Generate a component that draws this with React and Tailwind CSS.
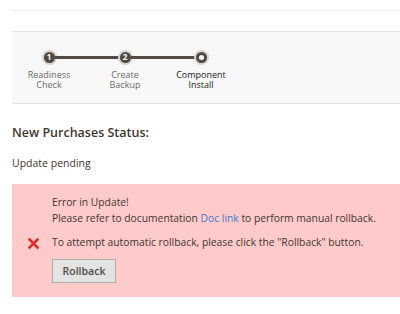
import React from "react";

const steps = [
  { n: "1", top: "Readiness", bottom: "Check", done: true },
  { n: "2", top: "Create", bottom: "Backup", done: true },
  { n: "", top: "Component", bottom: "Install", done: false },
];

const Step = ({ step, index }) => {
  const first = index === 0;
  const last = index === steps.length - 1;
  return (
    <div className="w-[76px] flex flex-col items-center">
      <div className="w-full h-[14px] flex items-center">
        <div className={`flex-1 h-[3px] ${first ? "" : "bg-[#514943]"}`}></div>
        {step.done ? (
          <div className="w-[11px] h-[11px] rounded-full bg-[#514943] shadow-[0_0_0_2px_#d6d3d0] flex items-center justify-center">
            <span className="text-[8px] leading-none font-bold text-white">{step.n}</span>
          </div>
        ) : (
          <div className="w-[11px] h-[11px] rounded-full bg-white border-[3px] border-[#514943] shadow-[0_0_0_2px_#d6d3d0]"></div>
        )}
        <div className={`flex-1 h-[3px] ${last ? "" : "bg-[#514943]"}`}></div>
      </div>
      <div
        className={`mt-[6px] text-[9px] leading-[10px] text-center whitespace-nowrap ${
          step.done ? "text-[#6b6b6b]" : "text-[#222]"
        }`}
      >
        <div>{step.top}</div>
        <div>{step.bottom}</div>
      </div>
    </div>
  );
};

export default function App() {
  return (
    <div className="w-[400px] h-[314px] bg-white pl-3 overflow-hidden font-['Open_Sans',sans-serif]">
      <div className="h-[11px] border-b border-[#ececec]"></div>

      <div className="mt-[20px] h-[73px] bg-[#f8f8f8] border-y border-[#e3e3e3] pt-[18px]">
        <div className="flex -ml-px">
          {steps.map((s, i) => (
            <Step key={i} step={s} index={i} />
          ))}
        </div>
      </div>

      <h2 className="mt-[19px] text-[12.5px] leading-[20px] font-semibold text-[#41362f]">
        New Purchases Status:
      </h2>
      <p className="mt-[11px] text-[10.5px] leading-[18px] text-[#41362f]">Update pending</p>

      <div className="mt-[12px] h-[113px] bg-[#ffcaca] flex">
        <div className="w-[40px] pl-[2px] flex items-center justify-center">
          <svg width="11" height="11" viewBox="0 0 11 11" className="mt-[6px]">
            <path d="M1.5 1.5 L9.5 9.5 M9.5 1.5 L1.5 9.5" stroke="#e02b27" strokeWidth="2.6" strokeLinecap="square" />
          </svg>
        </div>
        <div className="pt-[10px] text-[10.3px] leading-[16px] text-[#41362f] whitespace-nowrap">
          <div>Error in Update!</div>
          <div>
            Please refer to documentation <a className="text-[#3b7cc6]">Doc link</a> to perform manual rollback.
          </div>
          <div className="mt-[8px]">To attempt automatic rollback, please click the "Rollback" button.</div>
          <button className="mt-[9px] w-[64px] h-[24px] bg-[#e3e3e3] border border-[#adadad] text-[10.5px] font-semibold text-[#514943]">
            Rollback
          </button>
        </div>
      </div>
    </div>
  );
}
